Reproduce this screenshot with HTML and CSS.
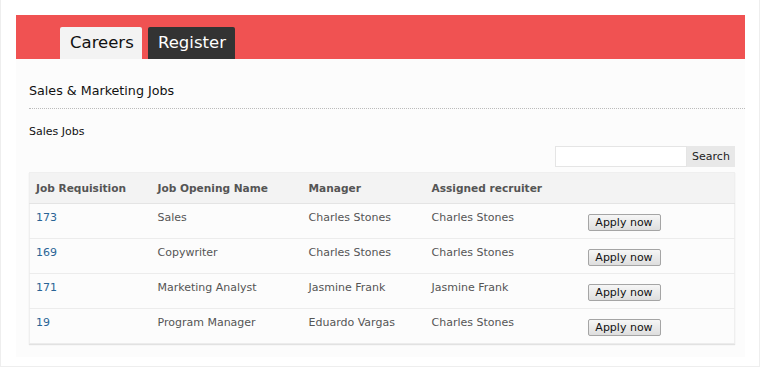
FILE: index.html
```html
<!DOCTYPE html>
<html lang="en">
<head>
    <meta charset="UTF-8">
    <title>Careers</title>
    <link rel="stylesheet" href="styles.css">
</head>
<body>
    <div class="page">
        <div class="topbar">
            <a class="tab tab-active" href="#">Careers</a>
            <a class="tab tab-dark" href="#">Register</a>
        </div>
        <div class="content">
            <h2 class="section-title">Sales &amp; Marketing Jobs</h2>
            <h3 class="sub-title">Sales Jobs</h3>
            <div class="search-row">
                <input class="search-input" type="text">
                <button class="search-btn">Search</button>
            </div>
            <table class="jobs">
                <thead>
                    <tr>
                        <th class="c1">Job Requisition</th>
                        <th class="c2">Job Opening Name</th>
                        <th class="c3">Manager</th>
                        <th class="c4">Assigned recruiter</th>
                        <th></th>
                    </tr>
                </thead>
                <tbody>
                    <tr>
                        <td><a href="#">173</a></td>
                        <td>Sales</td>
                        <td>Charles Stones</td>
                        <td>Charles Stones</td>
                        <td><button class="apply">Apply now</button></td>
                    </tr>
                    <tr>
                        <td><a href="#">169</a></td>
                        <td>Copywriter</td>
                        <td>Charles Stones</td>
                        <td>Charles Stones</td>
                        <td><button class="apply">Apply now</button></td>
                    </tr>
                    <tr>
                        <td><a href="#">171</a></td>
                        <td>Marketing Analyst</td>
                        <td>Jasmine Frank</td>
                        <td>Jasmine Frank</td>
                        <td><button class="apply">Apply now</button></td>
                    </tr>
                    <tr>
                        <td><a href="#">19</a></td>
                        <td>Program Manager</td>
                        <td>Eduardo Vargas</td>
                        <td>Charles Stones</td>
                        <td><button class="apply">Apply now</button></td>
                    </tr>
                </tbody>
            </table>
        </div>
    </div>
</body>
</html>
```
FILE: styles.css
```css
* {
    margin: 0;
    padding: 0;
    box-sizing: border-box;
}
body {
    background: #fff;
    font-family: "DejaVu Sans", Verdana, sans-serif;
    color: #222;
}
.page {
    width: 760px;
    height: 367px;
    border: 1px solid #eee;
    border-top: 0;
    padding: 15px 14px 0 15px;
}
/* red header with the two tabs */
.topbar {
    display: flex;
    align-items: flex-end;
    gap: 6px;
    height: 44px;
    padding-left: 44px;
    background: #f05252;
}
.tab {
    display: block;
    height: 32px;
    line-height: 32px;
    padding: 0 10px;
    font-size: 16.5px;
    text-decoration: none;
    border-radius: 2px 2px 0 0;
}
.tab-active {
    width: 82px;
    background: #f3f3f3;
    color: #111;
}
.tab-dark {
    width: 87px;
    background: #333;
    color: #fff;
}
.content {
    height: 298px;
    padding: 0 0 0 13px;
    background: #fcfcfc;
}
.section-title {
    padding: 24px 0 10px;
    border-bottom: 1px dotted #bbb;
    font-size: 12.7px;
    font-weight: normal;
    color: #111;
}
.sub-title {
    padding-top: 16px;
    font-size: 11px;
    font-weight: normal;
    color: #111;
}
.search-row {
    display: flex;
    justify-content: flex-end;
    margin: 8px 10px 5px 0;
}
.search-input {
    width: 132px;
    height: 21px;
    border: 1px solid #e5e5e5;
    background: #fff;
}
.search-btn {
    width: 48px;
    height: 21px;
    border: 0;
    background: #e8e8e8;
    font-family: inherit;
    font-size: 11px;
    color: #222;
}
.jobs {
    width: 706px;
    border-collapse: collapse;
    font-size: 11px;
    color: #555;
    background: #fcfcfc;
    box-shadow: 0 1px 1px #e2e2e2;
    border: 1px solid #efefef;
}
.jobs th {
    height: 31px;
    padding: 0 0 0 6px;
    background: #f3f3f3;
    text-align: left;
    font-size: 10.6px;
    font-weight: bold;
    color: #555;
    border-bottom: 1px solid #e4e4e4;
}
.jobs td {
    height: 35px;
    padding: 0 0 0 6px;
    vertical-align: top;
    padding-top: 7px;
    border-bottom: 1px solid #ececec;
}
.jobs .c1 { width: 122px; }
.jobs .c2 { width: 151px; }
.jobs .c3 { width: 123px; }
.jobs .c4 { width: 156px; }
.jobs a {
    color: #2a6496;
    text-decoration: none;
}
.apply {
    margin-top: 3px;
    height: 17px;
    width: 73px;
    font-family: inherit;
    font-size: 11px;
    color: #111;
    border: 1px solid #a5a5a5;
    border-radius: 2px;
    background: linear-gradient(#f6f6f6, #dedede);
}
```
